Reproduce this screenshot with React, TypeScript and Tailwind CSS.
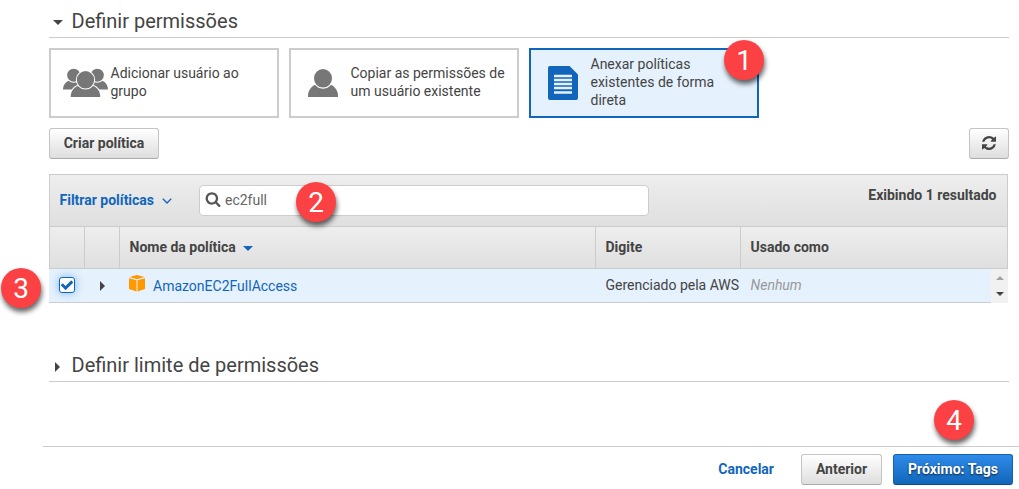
import React from "react";

const REFRESH =
  "M1511 928q0 5-1 7-64 268-268 434.5t-478 166.5q-146 0-282.5-55t-243.5-157l-129 129q-19 19-45 19t-45-19-19-45v-448q0-26 19-45t45-19h448q26 0 45 19t19 45-19 45l-137 137q71 66 161 102t187 36q134 0 250-65t186-179q11-17 53-117 8-23 30-23h192q13 0 22.5 9.5t9.5 22.5zm25-800v448q0 26-19 45t-45 19h-448q-26 0-45-19t-19-45 19-45l138-138q-148-137-349-137-134 0-250 65t-186 179q-11 17-53 117-8 23-30 23h-199q-13 0-22.5-9.5t-9.5-22.5v-7q65-268 270-434.5t480-166.5q146 0 284 55.5t245 156.5l130-129q19-19 45-19t45 19 19 45z";
const SEARCH =
  "M1216 832q0-185-131.5-316.5t-316.5-131.5-316.5 131.5-131.5 316.5 131.5 316.5 316.5 131.5 316.5-131.5 131.5-316.5zm512 832q0 52-38 90t-90 38q-54 0-90-38l-343-342q-179 124-399 124-143 0-273.5-55.5t-225-150-150-225-55.5-273.5 55.5-273.5 150-225 225-150 273.5-55.5 273.5 55.5 225 150 150 225 55.5 273.5q0 220-124 399l343 343q37 37 37 90z";
const CHECK =
  "M1671 566q0 40-28 68l-724 724-136 136q-28 28-68 28t-68-28l-136-136-362-362q-28-28-28-68t28-68l136-136q28-28 68-28t68 28l294 295 656-657q28-28 68-28t68 28l136 136q28 28 28 68z";

function Badge({ n, className }: { n: number; className: string }) {
  return (
    <span
      className={`absolute z-10 flex size-10 items-center justify-center rounded-full bg-[#fb4143] pt-[2px] text-[28px] leading-none text-white shadow-[1px_4px_5px_rgba(0,0,0,0.6)] ${className}`}
    >
      {n}
    </span>
  );
}

function Group() {
  return (
    <svg className="h-[30px] w-[46px] shrink-0" viewBox="0 0 46 30" fill="#777">
      <circle cx="10.700" cy="7.200" r="6.500" />
      <circle cx="34.300" cy="7.200" r="6.500" />
      <path d="M0 21.500c0-4 2-7 5.500-8.700 3 2.500 7.500 2.500 10.500 0V21.500zM45 21.500c0-4-2-7-5.500-8.700-3 2.500-7.500 2.500-10.500 0V21.500z" />
      <path
        d="M7.700 29c0-5.500 2.800-9.500 7.300-11.300 4.500 3.500 10.500 3.500 15 0 4.500 1.800 7.300 5.800 7.300 11.300z"
        stroke="#fff"
        strokeWidth="2"
        paintOrder="stroke"
      />
      <circle cx="22.500" cy="11.800" r="8.700" stroke="#fff" strokeWidth="2" paintOrder="stroke" />
      <path d="M0 29h46v1H0z" fill="#fff" />
    </svg>
  );
}

function Person() {
  return (
    <svg className="h-[28px] w-[30px]" viewBox="0 0 30 28" fill="#777">
      <path d="M0 28v-1.500c0-4.500 3-8.500 6.500-10.500h17c3.500 2 6.500 6 6.500 10.500V28z" />
      <ellipse cx="15" cy="9.300" rx="9" ry="9.300" stroke="#fff" strokeWidth="2.500" paintOrder="stroke" />
    </svg>
  );
}

function Doc() {
  return (
    <svg className="h-[34px] w-[30px]" viewBox="0 0 30 34">
      <path d="M2 0h19.500L30 8.500V32a2 2 0 0 1-2 2H2a2 2 0 0 1-2-2V2a2 2 0 0 1 2-2z" fill="#1166bb" />
      <path d="M6 10h18M6 14h18M6 18h18M6 22h18M6 26.500h18" stroke="#e5f1fd" strokeWidth="2.300" />
    </svg>
  );
}

const btn =
  "flex h-[31px] items-center justify-center rounded-[3px] border border-[#c4c4c4] border-b-[#aaa] bg-linear-to-b from-white to-[#dedede] pb-[2px] text-sm font-bold text-[#444]";
const bar = "bg-linear-to-b from-[#eee] to-[#dfdfdf]";

export default function App() {
  return (
    <div className="relative h-[489px] w-[1019px] overflow-hidden bg-white font-[Roboto,sans-serif] text-sm text-[#444]">
      <div className="ml-[49px] w-[960px]">
        <div className="flex h-[38px] items-center border-b border-[#ccc] pt-[5px]">
          <svg className="ml-1 mt-[3px] h-[5px] w-[10px]" viewBox="0 0 10 5">
            <path d="M0 0h10L5 5z" fill="#444" />
          </svg>
          <h2 className="ml-[8.500px] text-[20px] leading-6">Definir permissões</h2>
        </div>

        <div className="mt-[10px] flex gap-[10px]">
          <div className="flex h-[70px] w-[230px] border-2 border-[#ccc]">
            <div className="flex w-[59.500px] shrink-0 items-start pl-3 pt-[18px]">
              <Group />
            </div>
            <p className="pt-[14px] leading-[18px]">Adicionar usuário ao<br />grupo</p>
          </div>
          <div className="flex h-[70px] w-[230px] border-2 border-[#ccc]">
            <div className="flex w-[59.500px] shrink-0 items-start pl-[17px] pt-[19px]">
              <Person />
            </div>
            <p className="whitespace-nowrap pt-[14px] leading-[18px]">Copiar as permissões de<br />um usuário existente</p>
          </div>
          <div className="relative flex h-[70px] w-[230px] border-2 border-[#1166bb] bg-[#e5f1fd]">
            <div className="flex w-[59.500px] shrink-0 items-start pl-[17px] pt-[16px]">
              <Doc />
            </div>
            <p className="pt-[5px] leading-[18px]">Anexar políticas<br />existentes de forma<br />direta</p>
            <Badge n={1} className="left-[193px] top-[-10px]" />
          </div>
        </div>

        <div className="mt-[10px] flex justify-between">
          <button className={`${btn} w-[110px]`}>Criar política</button>
          <button className={`${btn} w-[40px]`}>
            <svg className="size-[14px]" viewBox="0 0 1536 1536" fill="#444"><path d={REFRESH} /></svg>
          </button>
        </div>

        <div className="mt-[15px] w-[959px]">
          <div className={`${bar} flex h-[52px] items-start border border-b-0 border-[#ccc]`}>
            <div className="flex w-[149px] items-center pl-[9.500px] pt-[15px] font-bold leading-5 text-[#1166bb]">
              Filtrar políticas
              <svg className="ml-2 mt-[2px] h-[6px] w-[10px]" viewBox="0 0 10 6" fill="none" stroke="#1166bb" strokeWidth="1.300">
                <path d="M.8.700 5 5 9.200.700" />
              </svg>
            </div>
            <div className="relative mt-[10px] flex h-[31px] w-[450px] items-center rounded-[4px] border border-[#ccc] bg-white pb-px pl-[5px] text-[#666]">
              <svg className="mb-[3px] size-[16px]" viewBox="0 0 1792 1792" fill="#555"><path d={SEARCH} /></svg>
              <span className="ml-[4px]">ec2full</span>
              <Badge n={2} className="left-[96px] top-[-4px]" />
            </div>
            <div className="ml-auto pr-[10.500px] pt-[10px] font-bold leading-5">Exibindo 1 resultado</div>
          </div>
          <div className={`${bar} grid h-[43px] grid-cols-[35px_35px_476px_145px_1fr] border border-[#ccc] font-bold leading-[40px]`}>
            <div className="border-r border-[#ccc]" />
            <div className="border-r border-[#ccc]" />
            <div className="flex items-center border-r border-[#ccc] pb-px pl-[9.500px]">
              Nome da política
              <svg className="ml-[7px] mt-[2px] h-[5px] w-[10px]" viewBox="0 0 10 5"><path d="M0 0h10L5 5z" fill="#1166bb" /></svg>
            </div>
            <div className="border-r border-[#ccc] pl-[9.500px]">Digite</div>
            <div className="pl-[9.500px]">Usado como</div>
          </div>
          <div className="relative flex h-[34px]">
            <div className="grid w-[942px] grid-cols-[36px_35px_476px_145px_1fr] border-b border-[#ccc] bg-[#e5f1fd] leading-[33px]">
              <div className="flex items-center pb-[2px] pl-[10px]">
                <span className="flex size-4 items-center justify-center rounded-[3px] border border-[#1166bb] bg-white shadow-[0_0_8px_#7ab5f0]">
                  <svg className="size-[14px] shrink-0" viewBox="0 0 1792 1792" fill="#1166bb"><path d={CHECK} /></svg>
                </span>
              </div>
              <div className="flex items-center pl-[15px]">
                <svg className="h-[10px] w-[5px]" viewBox="0 0 5 10"><path d="M0 0v10l5-5z" fill="#444" /></svg>
              </div>
              <div className="flex items-center pl-[9px]">
                <svg className="mb-[5px] h-[17px] w-[16px]" viewBox="0 0 16 17">
                  <path d="M0 3.200 7.500 5.200V16.500L0 14zM16 3.200 8.500 5.200V16.500L16 14z" fill="#ff9900" />
                  <path d="M.5 2 8 0l7.500 2L8 4.200z" fill="#ff9900" />
                </svg>
                <span className="ml-[8px] pt-px text-[#1166bb]">AmazonEC2FullAccess</span>
              </div>
              <div className="whitespace-nowrap pl-[9.500px]">Gerenciado pela AWS</div>
              <div className="pl-[9.500px] italic text-[#999]">Nenhum</div>
            </div>
            <div className="flex w-[17px] flex-col items-center justify-between bg-[#f1f1f1] pb-[7px] pt-[7px]">
              <svg className="h-[4px] w-[8px]" viewBox="0 0 8 4"><path d="M0 4h8L4 0z" fill="#a3a3a3" /></svg>
              <svg className="h-[4px] w-[8px]" viewBox="0 0 8 4"><path d="M0 0h8L4 4z" fill="#444" /></svg>
            </div>
            <Badge n={3} className="left-[-48px] top-[-1px]" />
          </div>
        </div>

        <div className="mt-[46px] flex h-[33px] items-center border-b border-[#ccc]">
          <svg className="ml-[6px] mt-[3px] h-[10px] w-[5px]" viewBox="0 0 5 10"><path d="M0 0v10l5-5z" fill="#444" /></svg>
          <h2 className="ml-[11.500px] text-[20px] leading-6">Definir limite de permissões</h2>
        </div>
      </div>

      <div className="relative ml-[43px] mt-[64px] flex items-center justify-end border-t border-[#ccc] pr-[6px] pt-[7px]">
        <a className="mr-[27px] pb-[2px] font-bold text-[#1166bb]">Cancelar</a>
        <button className={`${btn} mr-[11px] w-[81px]`}>Anterior</button>
        <button className="flex h-[31px] w-[120px] items-center justify-center rounded-[3px] border border-[#1463b0] border-b-[#0c4a88] bg-linear-to-b from-[#2e8be8] to-[#1166bb] pb-[2px] font-bold text-white [text-shadow:0_1px_2px_rgba(0,0,0,0.7)]">
          Próximo: Tags
        </button>
        <Badge n={4} className="left-[891px] top-[-47px]" />
      </div>
    </div>
  );
}
